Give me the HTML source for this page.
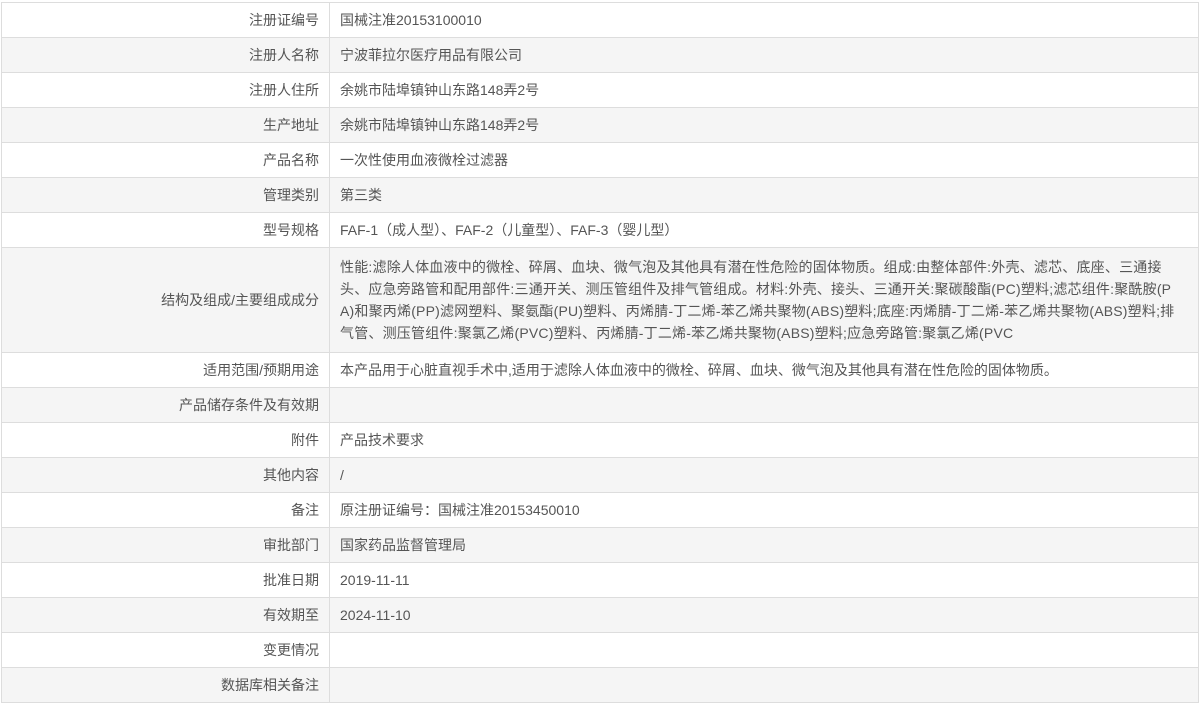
<!DOCTYPE html>
<html><head><meta charset="utf-8"><style>
body{margin:0;background:#fff;font-family:"Liberation Sans","Noto Sans CJK SC",sans-serif;font-size:14px;color:#555;}
table{position:absolute;left:1px;top:2px;width:1198px;border-collapse:collapse;}
td{border:1px solid #ddd;height:35px;padding:0 10px;box-sizing:border-box;line-height:22px;vertical-align:middle;}
td.l{width:328px;text-align:right;}
tr:nth-child(even) td{background:#f5f5f5;}
tr.big td{height:105px;}
tr.big td.v{letter-spacing:0.2px;padding-right:22px;word-break:break-all;}
</style></head><body>
<table>
<tr><td class="l">注册证编号</td><td>国械注准20153100010</td></tr>
<tr><td class="l">注册人名称</td><td>宁波菲拉尔医疗用品有限公司</td></tr>
<tr><td class="l">注册人住所</td><td>余姚市陆埠镇钟山东路148弄2号</td></tr>
<tr><td class="l">生产地址</td><td>余姚市陆埠镇钟山东路148弄2号</td></tr>
<tr><td class="l">产品名称</td><td>一次性使用血液微栓过滤器</td></tr>
<tr><td class="l">管理类别</td><td>第三类</td></tr>
<tr><td class="l">型号规格</td><td>FAF-1（成人型）、FAF-2（儿童型）、FAF-3（婴儿型）</td></tr>
<tr class="big"><td class="l">结构及组成/主要组成成分</td><td class="v">性能:滤除人体血液中的微栓、碎屑、血块、微气泡及其他具有潜在性危险的固体物质。组成:由整体部件:外壳、滤芯、底座、三通接头、应急旁路管和配用部件:三通开关、测压管组件及排气管组成。材料:外壳、接头、三通开关:聚碳酸酯(PC)塑料;滤芯组件:聚酰胺(PA)和聚丙烯(PP)滤网塑料、聚氨酯(PU)塑料、丙烯腈-丁二烯-苯乙烯共聚物(ABS)塑料;底座:丙烯腈-丁二烯-苯乙烯共聚物(ABS)塑料;排气管、测压管组件:聚氯乙烯(PVC)塑料、丙烯腈-丁二烯-苯乙烯共聚物(ABS)塑料;应急旁路管:聚氯乙烯(PVC</td></tr>
<tr><td class="l">适用范围/预期用途</td><td>本产品用于心脏直视手术中,适用于滤除人体血液中的微栓、碎屑、血块、微气泡及其他具有潜在性危险的固体物质。</td></tr>
<tr><td class="l">产品储存条件及有效期</td><td></td></tr>
<tr><td class="l">附件</td><td>产品技术要求</td></tr>
<tr><td class="l">其他内容</td><td>/</td></tr>
<tr><td class="l">备注</td><td>原注册证编号：国械注准20153450010</td></tr>
<tr><td class="l">审批部门</td><td>国家药品监督管理局</td></tr>
<tr><td class="l">批准日期</td><td>2019-11-11</td></tr>
<tr><td class="l">有效期至</td><td>2024-11-10</td></tr>
<tr><td class="l">变更情况</td><td></td></tr>
<tr><td class="l">数据库相关备注</td><td></td></tr>
</table>
</body></html>
